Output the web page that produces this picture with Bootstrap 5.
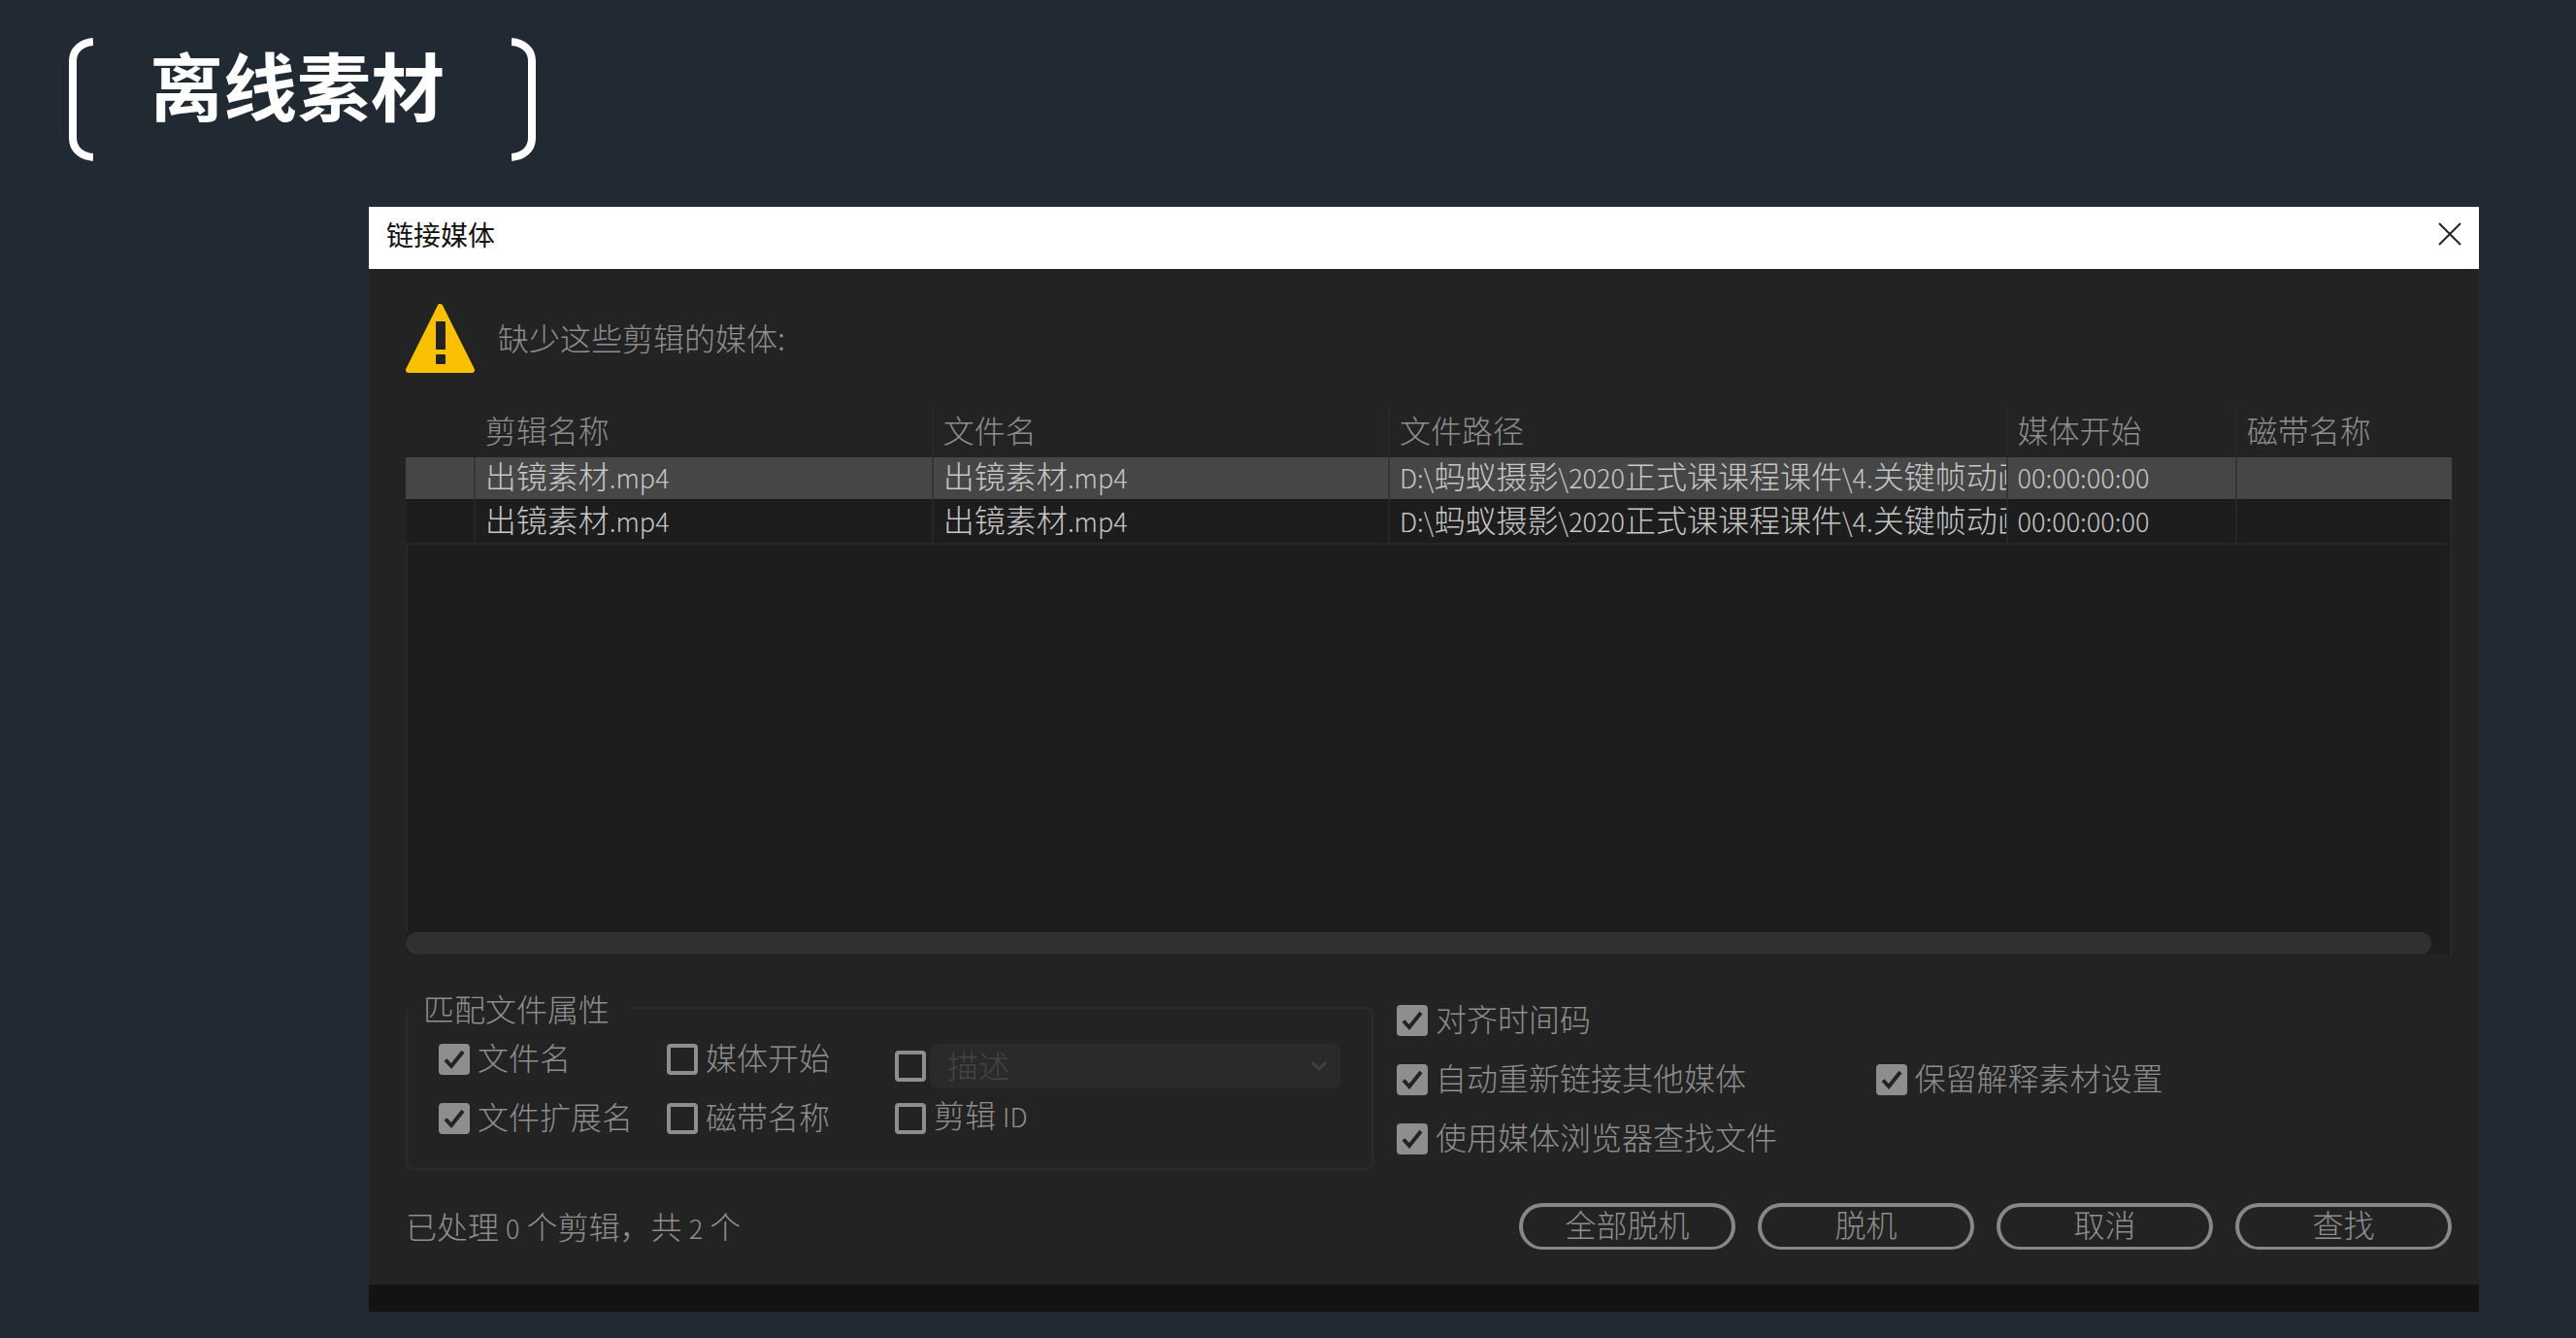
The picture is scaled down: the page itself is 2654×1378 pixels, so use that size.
<!DOCTYPE html>
<html lang="zh-CN">
<head>
<meta charset="utf-8">
<meta name="viewport" content="width=device-width, initial-scale=1">
<title>离线素材</title>
<link href="https://cdn.jsdelivr.net/npm/bootstrap@5.3.0/dist/css/bootstrap.min.css" rel="stylesheet">
<style>
  body { background: #212a33; color: #8e8e8e; font: 300 32px/40px "Noto Sans CJK SC", sans-serif; }
  .slide-head { padding: 39px 71px 47px; }
  .bracket { width: 25px; height: 127px; flex: none; }
  .slide-title { font: 700 76px/94px "Noto Sans CJK SC", sans-serif; color: #fff; margin: 0 69px 0 58px; }
  .dialog-box { margin: 0 100px 28px 380px; background: #232323; border-bottom: 28px solid #131313; }
  .dialog-bar { height: 64px; background: #fff; padding: 0 18px 8px; }
  .dialog-name { font: 400 28px/40px "Noto Sans CJK SC", sans-serif; color: #111; margin: 0; }
  .close-x { width: 24px; height: 24px; padding: 0; border: 0; background: none; display: flex; }
  .dialog-main { padding: 36px 28px 36px 38px; }
  .ltn { font-size: 27px; }
  .warn-row { gap: 24px; margin-bottom: 34px; }
  .warn-row span { padding-bottom: 4px; }
  .clip-list { min-height: 565px; background: #1d1d1d; }
  .clip-table { table-layout: fixed; width: 100%; color: #c6c6c6; border-collapse: separate; border-spacing: 0; line-height: 36px; }
  .clip-table th { height: 53px; padding: 0 0 6px 10px; background: #232323; color: #8e8e8e; font-weight: 300; border-right: 2px solid #282828; white-space: nowrap; }
  .clip-table th:first-child, .clip-table th:last-child { border-right: 0; }
  .clip-table td { height: 43px; padding: 0 0 4px 10px; white-space: nowrap; border-right: 2px solid #262626; border-bottom: 2px solid #262626; }
  .clip-table td.path { overflow: hidden; }
  .clip-table td:last-child { border-right-color: #282828; }
  .clip-table .picked td { background: #464646; border-right-color: #353535; border-bottom-color: #1b1b1b; }
  .clip-table .picked td:last-child { border-right-color: #464646; }
  .clip-rest { border: solid #282828; border-width: 0 2px; }
  .scroll-track { height: 23px; padding-right: 19px; border-right: 2px solid #282828; }
  .scroll-thumb { height: 23px; border-radius: 12px; background: #303030; }
  .options { gap: 24px; margin: 35px 0 34px; }
  .match-set { flex: 0 0 47.3%; border: 2px solid #2b2b2b; border-radius: 8px; padding: 17px 32px 34px; }
  .match-set legend { float: none; width: auto; font-size: 32px; line-height: 40px; margin: 0 0 0 -30px; padding: 0 22px 0 14px; }
  .match-col { width: 235px; }
  .stack { display: flex; flex-direction: column; gap: 29px; }
  .stack.tight { gap: 13px; }
  .link-set { flex: 1 1 0; padding-top: 17px; }
  .link-left { flex: 493 1 0; }
  .link-right { flex: 593 1 0; padding-top: 61px; }
  .tick { display: flex; align-items: center; gap: 8px; min-height: 32px; margin: 0; padding: 0; }
  .tick label { line-height: 26px; padding-bottom: 6px; white-space: nowrap; }
  .tick .form-check-input { flex: none; float: none; width: 32px; height: 32px; margin: 0; border: 4px solid #8e8e8e; border-radius: 4px; background-color: transparent; }
  .tick .form-check-input:checked { background: #8e8e8e url("data:image/svg+xml,%3Csvg xmlns='http://www.w3.org/2000/svg' viewBox='0 0 24 24'%3E%3Cpath d='M3 12.500l6 6.500L21 4' fill='none' stroke='%23232323' stroke-width='4'/%3E%3C/svg%3E") center/24px 24px no-repeat; }
  .kind { height: 46px; padding: 0 18px 4px; border: 0; border-radius: 8px; font-size: 32px; line-height: 40px; font-weight: 300;
    background: #2a2a2a url("data:image/svg+xml,%3Csvg xmlns='http://www.w3.org/2000/svg' viewBox='0 0 18 12'%3E%3Cpath d='M2 2l7 7 7-7' fill='none' stroke='%23404040' stroke-width='3'/%3E%3C/svg%3E") right 13px center/18px 12px no-repeat; color: #444; margin-left: -4px; }
  .kind:disabled { background-color: #2a2a2a; color: #444; opacity: 1; }
  .act-row { gap: 23px; }
  .pill { width: 223px; height: 48px; padding: 0 0 8px; border: 4px solid #888; border-bottom-width: 3px; border-radius: 24px; font-size: 32px; font-weight: 300; line-height: 32px; color: #8e8e8e; }
</style>
<script src="https://cdn.jsdelivr.net/npm/bootstrap@5.3.0/dist/js/bootstrap.bundle.min.js"></script>
</head>
<body>
<header class="slide-head d-flex align-items-start">
  <svg class="bracket" viewBox="0 0 25 127" fill="none" stroke="#fff" stroke-width="8" aria-hidden="true"><path d="M25 4C13 5 4 12 4 24V103C4 115 13 122 25 123"/></svg>
  <h1 class="slide-title">离线素材</h1>
  <svg class="bracket" viewBox="0 0 25 127" fill="none" stroke="#fff" stroke-width="8" aria-hidden="true"><path d="M0 4C12 5 21 12 21 24V103C21 115 12 122 0 123"/></svg>
</header>

<main class="dialog-box" role="dialog" aria-labelledby="dlgName">
  <div class="dialog-bar d-flex align-items-center justify-content-between">
    <h2 class="dialog-name" id="dlgName">链接媒体</h2>
    <button type="button" class="close-x" aria-label="关闭"><svg width="24" height="24" viewBox="0 0 24 24" stroke="#222" stroke-width="2" aria-hidden="true"><path d="M1 1L23 23M23 1L1 23"/></svg></button>
  </div>

  <div class="dialog-main">
    <div class="warn-row d-flex align-items-center">
      <svg width="71" height="71" viewBox="0 0 71 71" aria-hidden="true"><path d="M35.500 3L68 68H3Z" fill="#f8c000" stroke="#f8c000" stroke-width="6" stroke-linejoin="round"/><rect x="31" y="18" width="10" height="29" rx="1" fill="#232323"/><rect x="31" y="52" width="10" height="10" rx="1" fill="#232323"/></svg>
      <span>缺少这些剪辑的媒体:</span>
    </div>

    <div class="clip-list d-flex flex-column">
      <table class="clip-table">
        <colgroup><col style="width:3.4%"><col style="width:22.4%"><col style="width:22.3%"><col style="width:30.2%"><col style="width:11.2%"><col></colgroup>
        <thead><tr><th></th><th>剪辑名称</th><th>文件名</th><th>文件路径</th><th>媒体开始</th><th>磁带名称</th></tr></thead>
        <tbody>
          <tr class="picked"><td></td><td>出镜素材<span class="ltn">.mp4</span></td><td>出镜素材<span class="ltn">.mp4</span></td><td class="path"><span class="ltn">D:\</span>蚂蚁摄影<span class="ltn">\2020</span>正式课课程课件<span class="ltn">\4.</span>关键帧动画</td><td><span class="ltn">00:00:00:00</span></td><td></td></tr>
          <tr><td></td><td>出镜素材<span class="ltn">.mp4</span></td><td>出镜素材<span class="ltn">.mp4</span></td><td class="path"><span class="ltn">D:\</span>蚂蚁摄影<span class="ltn">\2020</span>正式课课程课件<span class="ltn">\4.</span>关键帧动画</td><td><span class="ltn">00:00:00:00</span></td><td></td></tr>
        </tbody>
      </table>
      <div class="clip-rest flex-grow-1"></div>
      <div class="scroll-track"><div class="scroll-thumb"></div></div>
    </div>

    <div class="options d-flex">
      <fieldset class="match-set">
        <legend>匹配文件属性</legend>
        <div class="d-flex">
          <div class="match-col stack">
            <div class="tick"><input class="form-check-input" type="checkbox" id="mName" checked><label for="mName">文件名</label></div>
            <div class="tick"><input class="form-check-input" type="checkbox" id="mExt" checked><label for="mExt">文件扩展名</label></div>
          </div>
          <div class="match-col stack">
            <div class="tick"><input class="form-check-input" type="checkbox" id="mStart"><label for="mStart">媒体开始</label></div>
            <div class="tick"><input class="form-check-input" type="checkbox" id="mTape"><label for="mTape">磁带名称</label></div>
          </div>
          <div class="flex-grow-1 stack tight">
            <div class="tick"><input class="form-check-input" type="checkbox" id="mDesc" aria-label="描述"><select class="form-select kind" aria-label="属性" disabled><option>描述</option></select></div>
            <div class="tick"><input class="form-check-input" type="checkbox" id="mId"><label for="mId">剪辑 <span class="ltn">ID</span></label></div>
          </div>
        </div>
      </fieldset>
      <div class="link-set d-flex">
        <div class="link-left stack">
          <div class="tick"><input class="form-check-input" type="checkbox" id="lTime" checked><label for="lTime">对齐时间码</label></div>
          <div class="tick"><input class="form-check-input" type="checkbox" id="lAuto" checked><label for="lAuto">自动重新链接其他媒体</label></div>
          <div class="tick"><input class="form-check-input" type="checkbox" id="lBrowse" checked><label for="lBrowse">使用媒体浏览器查找文件</label></div>
        </div>
        <div class="link-right">
          <div class="tick"><input class="form-check-input" type="checkbox" id="lKeep" checked><label for="lKeep">保留解释素材设置</label></div>
        </div>
      </div>
    </div>

    <div class="d-flex justify-content-between align-items-center">
      <span>已处理 <span class="ltn">0</span> 个剪辑，共 <span class="ltn">2</span> 个</span>
      <div class="act-row d-flex">
        <button type="button" class="btn pill">全部脱机</button>
        <button type="button" class="btn pill">脱机</button>
        <button type="button" class="btn pill">取消</button>
        <button type="button" class="btn pill">查找</button>
      </div>
    </div>
  </div>
</main>
</body>
</html>
